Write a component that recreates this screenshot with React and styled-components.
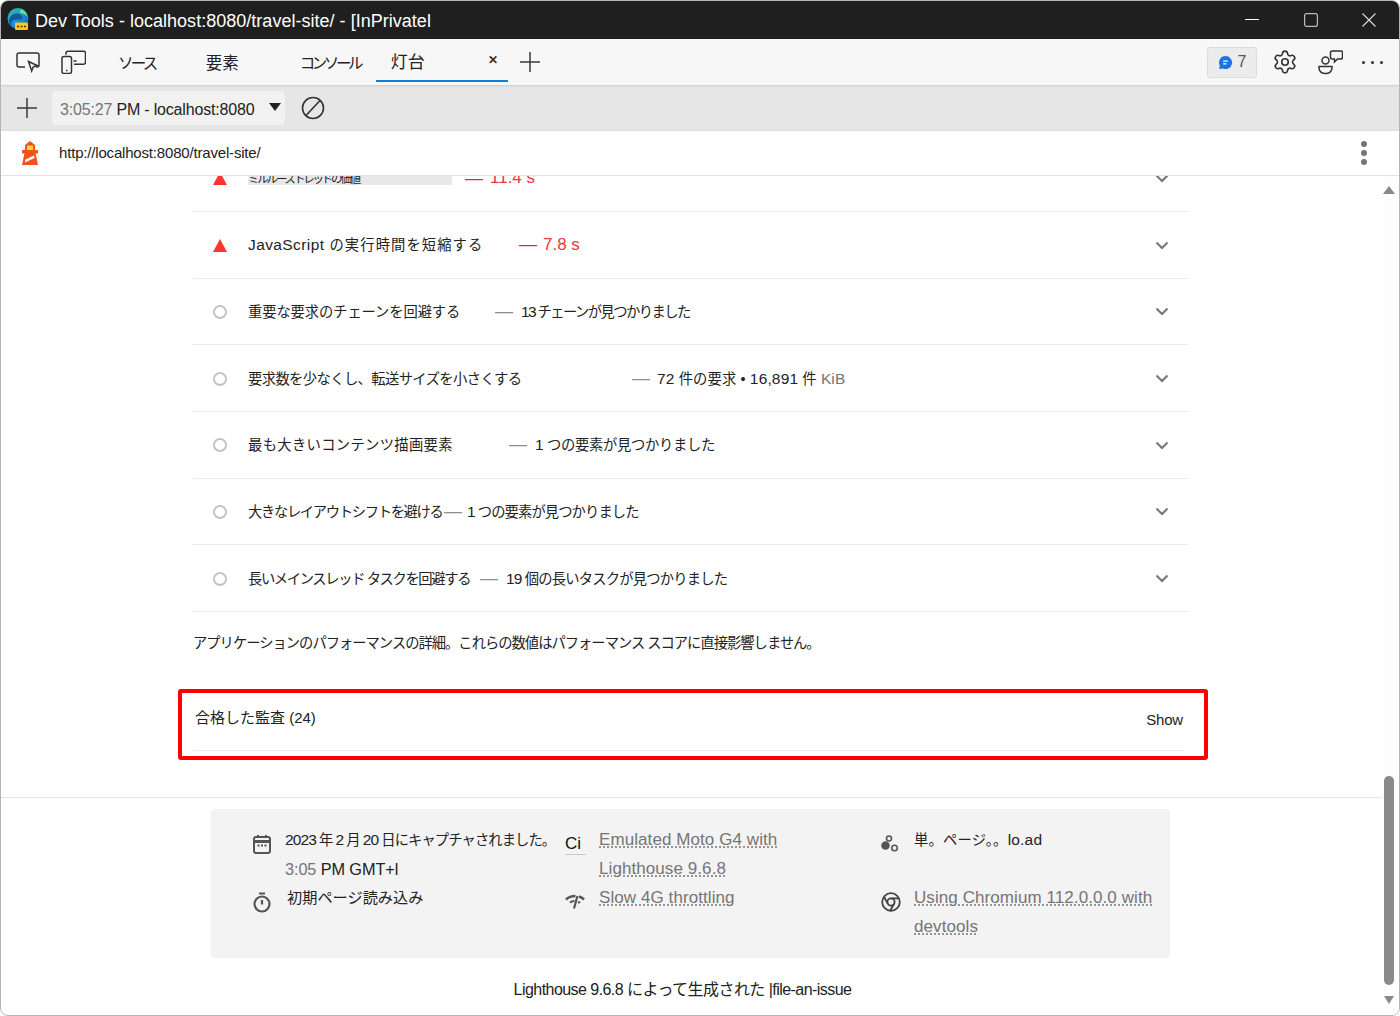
import styled, { createGlobalStyle } from "styled-components";
import { Settings } from "lucide-react";

const Global = createGlobalStyle`
  html, body { margin: 0; padding: 0; background: #fff; }
  body { font-family: "Liberation Sans", "Noto Sans CJK JP", sans-serif; color: #1a1a1a; }
`;

const Muted = styled.span`
  color: #757575;
`;

const Lat = styled.span`
  font-size: 15.5px;
  letter-spacing: ${(p) => (p.$ls === undefined ? "inherit" : `${p.$ls}px`)};
`;

const rows = [
  { id: 1, kind: "fail", hl: true, title: "ミルルーズトレッドの価値", w: 217, dw: 25, value: "11.4 s" },
  { id: 2, kind: "fail", title: <><Lat $ls={0.4}>JavaScript</Lat> の実行時間を短縮する</>, ts: 1.1, w: 271, dw: 24, value: "7.8 s" },
  { id: 3, kind: "info", title: "重要な要求のチェーンを回避する", w: 247, dw: 26, value: <><Lat>13</Lat> チェーンが見つかりました</>, vs: -1.55 },
  { id: 4, kind: "info", title: "要求数を少なくし、転送サイズを小さくする", ts: -0.6, w: 384, dw: 25, value: <><Lat>72</Lat> 件の要求 • <Lat>16,891</Lat> 件 <Muted><Lat>KiB</Lat></Muted></>, vs: 0.15 },
  { id: 5, kind: "info", title: "最も大きいコンテンツ描画要素", ts: 0.33, w: 261, dw: 26, value: <><Lat>1</Lat> つの要素が見つかりました</>, vs: -0.3 },
  { id: 6, kind: "info", title: "大きなレイアウトシフトを避ける", ts: -1.33, w: 196, dw: 23, value: <><Lat>1</Lat> つの要素が見つかりました</>, vs: -0.9 },
  { id: 7, kind: "info", title: "長いメインスレッド タスクを回避する", ts: -1.37, w: 232, dw: 26, value: <><Lat>19</Lat> 個の長いタスクが見つかりました</>, vs: -0.8 },
];

function EdgeLogo() {
  return (
    <svg width="24" height="26" viewBox="0 0 24 26">
      <defs>
        <linearGradient id="edge" x1="0" y1="0" x2="1" y2="1">
          <stop offset="0" stopColor="#35c1a0" />
          <stop offset="0.55" stopColor="#1b8fd8" />
          <stop offset="1" stopColor="#0b5fa8" />
        </linearGradient>
      </defs>
      <circle cx="12" cy="11.5" r="10.5" fill="url(#edge)" />
      <path d="M3 13c1-6 8-8 12-5 2 1.5 2 4 0 4.5-2 .5-5-1-8 1-2 1.5-2 4-1 6-2-1-3-3-3-6.5z" fill="#0d5c9e" />
      <path d="M15 2c3 1 6 4 6.5 8-2-3-5-4-8-4z" fill="#6fe07a" />
      <rect x="9" y="15.5" width="13" height="7.5" rx="1" fill="#f8c81c" />
      <path d="M11 19.5h2M14.5 19.5h2M18 19.5h2" stroke="#4b3b00" strokeWidth="1.5" />
    </svg>
  );
}

function Inspect() {
  return (
    <svg width="24" height="23" viewBox="0 0 24 23" fill="none" stroke="#333" strokeWidth="1.5">
      <path d="M9 16H3a2 2 0 0 1-2-2V4a2 2 0 0 1 2-2h18a2 2 0 0 1 2 2v10a2 2 0 0 1-2 2h-1" />
      <path d="M12.5 10.5l8.5 4-3.8 1.5-1.5 4z" />
    </svg>
  );
}

function DeviceToggle() {
  return (
    <svg width="25" height="24" viewBox="0 0 25 24" fill="none" stroke="#333" strokeWidth="1.5">
      <path d="M5 4.7V3.2a2 2 0 0 1 2-2h15.5a2 2 0 0 1 2 2v9a2 2 0 0 1-2 2H13" />
      <rect x="1" y="6.5" width="9.5" height="17" rx="2" />
      <path d="M5 20.5h1.5" />
      <path d="M12.5 11h3" />
    </svg>
  );
}

function PlusIcon({ size = 22 }) {
  return (
    <svg width={size} height={size} viewBox="0 0 22 22" fill="none" stroke="#3a3a3a" strokeWidth="1.5">
      <path d="M11 1v20M1 11h20" />
    </svg>
  );
}

function BanIcon() {
  return (
    <svg width="24" height="24" viewBox="0 0 24 24" fill="none" stroke="#333" strokeWidth="1.6">
      <circle cx="12" cy="12" r="10.5" />
      <path d="M5 19.5L19 4.5" />
    </svg>
  );
}

function LighthouseLogo() {
  return (
    <svg width="18" height="26" viewBox="0 0 18 26">
      <path d="M9 1l5 4v6H4V5z" fill="#f4511e" />
      <rect x="6" y="5.5" width="6" height="5" fill="#fdd24a" />
      <rect x="1" y="10" width="16" height="3.5" rx="0.5" fill="#f4511e" />
      <path d="M3.5 13h11l2.5 12H1z" fill="#f4511e" />
      <path d="M4.5 19.5l8.5-4 .5 2.5-9.5 4.5z" fill="#fff" />
    </svg>
  );
}

function ChatBubble() {
  return (
    <svg width="15" height="15" viewBox="0 0 16 16">
      <path d="M8 1a7 7 0 1 1-3 13.3L1 15l1-3.6A7 7 0 0 1 8 1z" fill="#1a73e8" />
      <path d="M5.5 6.5h5M5.5 9.5h3.5" stroke="#fff" strokeWidth="1.2" />
    </svg>
  );
}

function PeopleChat() {
  return (
    <svg width="25" height="25" viewBox="0 0 25 25" fill="none" stroke="#333" strokeWidth="1.5">
      <circle cx="7.5" cy="10.5" r="3.5" />
      <path d="M1 16.5h13V18a5.5 5.5 0 0 1-5.5 5.5h-2A5.5 5.5 0 0 1 1 18z" />
      <path d="M14 1h9a1.5 1.5 0 0 1 1.5 1.5v5A1.5 1.5 0 0 1 23 9h-3.5l-3 3V9H14a1.5 1.5 0 0 1-1.5-1.5v-5A1.5 1.5 0 0 1 14 1z" />
    </svg>
  );
}

function Chevron() {
  return (
    <svg width="14" height="9" viewBox="0 0 14 9" fill="none" stroke="#757575" strokeWidth="2">
      <path d="M1.5 1.5L7 7l5.5-5.5" />
    </svg>
  );
}

function CalendarIcon() {
  return (
    <svg width="18" height="20" viewBox="0 0 18 20" fill="none" stroke="#555">
      <rect x="1" y="3" width="16" height="16" rx="2" strokeWidth="2" />
      <path d="M1 7.5h16" strokeWidth="3" />
      <path d="M5 1v3M13 1v3" strokeWidth="2" />
      <path d="M4.5 11.5h2M8 11.5h2M11.5 11.5h2" strokeWidth="1.8" />
    </svg>
  );
}

function TimerIcon() {
  return (
    <svg width="18" height="21" viewBox="0 0 18 21" fill="none" stroke="#555" strokeWidth="2.2">
      <circle cx="9" cy="12" r="7.5" />
      <path d="M6 1.5h6M9 8v4.5" />
    </svg>
  );
}

function WifiIcon() {
  return (
    <svg width="20" height="15" viewBox="0 0 20 15" fill="none" stroke="#555">
      <path d="M1 5.5C3.5 3 7 2 10.5 2" strokeWidth="2.5" />
      <path d="M14 2.5c2 .5 3.5 1.5 5 3" strokeWidth="2.5" />
      <path d="M5 8.5C6.500 7.500 8 7 9.500 7M13 8c.8.2 1.500.5 2 1" strokeWidth="2.2" />
      <path d="M12.5 2L9 14.5" strokeWidth="2.2" />
    </svg>
  );
}

function LoadIcon() {
  return (
    <svg width="20" height="20" viewBox="0 0 20 20" fill="none" stroke="#555" strokeWidth="1.6">
      <circle cx="8" cy="4.5" r="2.5" />
      <circle cx="4.5" cy="11.5" r="3.5" fill="#555" />
      <circle cx="13.5" cy="14" r="2.8" />
    </svg>
  );
}

function ChromeIcon() {
  return (
    <svg width="20" height="20" viewBox="0 0 20 20" fill="none" stroke="#444" strokeWidth="1.8">
      <circle cx="10" cy="10" r="8.8" />
      <circle cx="10" cy="10" r="3.6" />
      <path d="M10 6.4h8M6.9 11.8L2.9 4.8M13.1 11.8L9 19" />
    </svg>
  );
}

export default function App() {
  return (
    <>
      <Global />
      <Win>
        <TitleBar>
          <EdgeLogo />
          <WinTitle>Dev Tools - localhost:8080/travel-site/ - [InPrivatel</WinTitle>
          <WinControls>
            <svg width="14" height="14" viewBox="0 0 14 14" stroke="#fff" fill="none"><path d="M0 6.5h14" /></svg>
            <svg width="14" height="14" viewBox="0 0 14 14" stroke="#bbb" strokeWidth="1.2" fill="none"><rect x=".6" y=".6" width="12.8" height="12.8" rx="2" /></svg>
            <svg width="14" height="14" viewBox="0 0 14 14" stroke="#ddd" strokeWidth="1.1" fill="none"><path d="M.5.5l13 13M13.5.5l-13 13" /></svg>
          </WinControls>
        </TitleBar>

        <Toolbar>
          <ToolIcon $w={24}><Inspect /></ToolIcon>
          <ToolIcon $w={25} $ml={21}><DeviceToggle /></ToolIcon>
          <Tab $ml={32} $ls={-2.7}>ソース</Tab>
          <Tab $ml={50} $size={16.5} $ls={0}>要素</Tab>
          <Tab $ml={61} $ls={-3.4}>コンソール</Tab>
          <ActiveTab>
            灯台
            <TabClose>✕</TabClose>
          </ActiveTab>
          <ToolIcon $w={22} $ml={11}><PlusIcon /></ToolIcon>
          <ToolRight>
            <IssuesBadge><ChatBubble /><span>7</span></IssuesBadge>
            <Settings size={26} strokeWidth={1.5} color="#333" />
            <PeopleChat />
            <MoreDots>
              <i /><i /><i />
            </MoreDots>
          </ToolRight>
        </Toolbar>

        <ReportBar>
          <PlusIcon />
          <ReportSelect>
            <span><Muted>3:05:27</Muted> PM - localhost:8080</span>
            <Caret />
          </ReportSelect>
          <BanIcon />
        </ReportBar>

        <UrlBar>
          <LighthouseLogo />
          <UrlText>http://localhost:8080/travel-site/</UrlText>
          <VDots><i /><i /><i /></VDots>
        </UrlBar>

        <Body>
          <Scroller>
            <Main>
              <AuditList>
                {rows.map((r) => (
                  <AuditRow key={r.id}>
                    <Status>{r.kind === "fail" ? <Triangle /> : <Ring />}</Status>
                    <AuditTitle $w={r.w} $ls={r.ts}>
                      {r.hl ? <Highlight>{r.title}</Highlight> : r.title}
                    </AuditTitle>
                    <Dash $fail={r.kind === "fail"} $w={r.dw}>—</Dash>
                    <AuditValue $fail={r.kind === "fail"} $ls={r.vs}>{r.value}</AuditValue>
                    <ChevronCell><Chevron /></ChevronCell>
                  </AuditRow>
                ))}
              </AuditList>
              <Note>アプリケーションのパフォーマンスの詳細。これらの数値はパフォーマンス スコアに直接影響しません。</Note>
              <Marked>
                <PassedRow>
                  <PassedTitle>合格した監査 (24)</PassedTitle>
                  <ShowLabel>Show</ShowLabel>
                </PassedRow>
              </Marked>
            </Main>
            <FooterRule />
            <EnvBox>
              <EnvItem>
                <EnvIcon><CalendarIcon /></EnvIcon>
                <EnvText $ls={-0.9}>
                  <Lat>2023</Lat> 年 <Lat>2</Lat> 月 <Lat>20</Lat> 日にキャプチャされました。<br />
                  <EnvTime><Muted>3:05</Muted> PM GMT+l</EnvTime>
                </EnvText>
              </EnvItem>
              <EnvItem>
                <CiCell><CiMark>Ci</CiMark></CiCell>
                <EnvLink>Emulated Moto G4 with<br />Lighthouse 9.6.8</EnvLink>
              </EnvItem>
              <EnvItem>
                <EnvIcon $w={33}><LoadIcon /></EnvIcon>
                <EnvText $ls={0.2}>単。ページ。。<Lat>lo.ad</Lat></EnvText>
              </EnvItem>
              <EnvItem>
                <EnvIcon $top={5} $w={34}><TimerIcon /></EnvIcon>
                <EnvText $size={15.2} $ls={0}>初期ページ読み込み</EnvText>
              </EnvItem>
              <EnvItem>
                <EnvIcon $top={7} $w={34}><WifiIcon /></EnvIcon>
                <EnvLink>Slow 4G throttling</EnvLink>
              </EnvItem>
              <EnvItem>
                <EnvIcon $top={5} $w={33}><ChromeIcon /></EnvIcon>
                <EnvLink>Using Chromium 112.0.0.0 with<br />devtools</EnvLink>
              </EnvItem>
            </EnvBox>
            <Generated>Lighthouse 9.6.8 によって生成された |file-an-issue</Generated>
          </Scroller>
          <ScrollTrack>
            <ArrowUp />
            <ThumbSpace />
            <Thumb />
            <ArrowDown />
          </ScrollTrack>
        </Body>
      </Win>
    </>
  );
}

const Win = styled.div`
  box-sizing: border-box;
  width: 1400px;
  height: 1016px;
  display: flex;
  flex-direction: column;
  border: 1px solid #b5b5b5;
  border-radius: 8px;
  overflow: hidden;
  background: #fff;
`;

const TitleBar = styled.div`
  flex: 0 0 38px;
  display: flex;
  align-items: center;
  gap: 5px;
  padding-left: 5px;
  background: #1f1f1f;
  color: #fff;
`;

const WinTitle = styled.div`
  padding-top: 2px;
  font-size: 18px;
  letter-spacing: 0.02px;
`;

const WinControls = styled.div`
  margin-left: auto;
  display: flex;
  align-items: center;
  gap: 44.5px;
  padding-right: 23px;
`;

const Toolbar = styled.div`
  flex: 0 0 46px;
  box-sizing: border-box;
  display: flex;
  align-items: center;
  padding-left: 15px;
  background: #f7f7f7;
  box-shadow: 0 1px 2px rgba(0, 0, 0, 0.12);
  position: relative;
`;

const ToolIcon = styled.div`
  display: flex;
  width: ${(p) => p.$w}px;
  margin-left: ${(p) => p.$ml || 0}px;
`;

const Tab = styled.div`
  margin-left: ${(p) => p.$ml}px;
  font-size: ${(p) => p.$size || 15.5}px;
  letter-spacing: ${(p) => p.$ls}px;
  color: #222;
`;

const ActiveTab = styled.div`
  box-sizing: border-box;
  margin-left: 15.5px;
  align-self: flex-end;
  width: 132px;
  height: 42px;
  display: flex;
  align-items: center;
  justify-content: space-between;
  padding: 0 10px 0 15px;
  border-bottom: 2px solid #0f7fd8;
  margin-bottom: 3px;
  font-size: 17px;
  color: #222;
`;

const TabClose = styled.span`
  font-size: 12px;
  font-weight: bold;
  color: #333;
`;

const ToolRight = styled.div`
  margin-left: auto;
  display: flex;
  align-items: center;
  gap: 20px;
  padding-right: 16px;
`;

const IssuesBadge = styled.div`
  box-sizing: border-box;
  width: 50px;
  height: 31px;
  margin-right: -5px;
  display: flex;
  align-items: center;
  justify-content: center;
  gap: 5px;
  background: #ececec;
  border: 1px solid #dcdcdc;
  border-radius: 3px;
  font-size: 16px;
  color: #555;
`;

const MoreDots = styled.div`
  display: flex;
  gap: 6px;
  margin-left: -1px;
  i {
    width: 3px;
    height: 3px;
    border-radius: 50%;
    background: #333;
  }
`;

const ReportBar = styled.div`
  flex: 0 0 46px;
  display: flex;
  align-items: center;
  padding-left: 15px;
  background: #e6e6e6;
  border-bottom: 1px solid #dcdcdc;
  box-sizing: border-box;
`;

const ReportSelect = styled.div`
  box-sizing: border-box;
  width: 233px;
  height: 34px;
  margin: 0 16px 0 14px;
  padding: 4px 4px 0 8px;
  display: flex;
  align-items: center;
  justify-content: space-between;
  background: #f1f1f1;
  border-radius: 3px;
  font-size: 16px;
  letter-spacing: -0.18px;
  color: #222;
`;

const Caret = styled.span`
  width: 0;
  height: 0;
  border-left: 6px solid transparent;
  border-right: 6px solid transparent;
  border-top: 8px solid #222;
  margin-top: -6px;
`;

const UrlBar = styled.div`
  flex: 0 0 45px;
  box-sizing: border-box;
  display: flex;
  align-items: center;
  padding: 0 32px 0 20px;
  background: #fff;
  border-bottom: 1px solid #e2e2e2;
`;

const UrlText = styled.div`
  margin-left: 20px;
  padding-bottom: 2px;
  font-size: 15px;
  letter-spacing: -0.18px;
  color: #222;
`;

const VDots = styled.div`
  margin-left: auto;
  display: flex;
  flex-direction: column;
  gap: 3px;
  i {
    width: 6px;
    height: 6px;
    border-radius: 50%;
    background: #757575;
  }
`;

const Body = styled.div`
  flex: 1;
  min-height: 0;
  display: flex;
`;

const Scroller = styled.div`
  flex: 1;
  min-width: 0;
  overflow: hidden;
`;

const Main = styled.div`
  padding: 0 194px 0 192px;
`;

const AuditList = styled.div`
  margin-top: -30.7px;
`;

const AuditRow = styled.div`
  box-sizing: border-box;
  height: 66.67px;
  padding-top: 1px;
  display: flex;
  align-items: center;
  border-bottom: 1px solid #ebebeb;
`;

const Status = styled.div`
  flex: 0 0 55px;
  box-sizing: border-box;
  display: flex;
  justify-content: center;
  padding-right: 1px;
`;

const Triangle = styled.span`
  width: 0;
  height: 0;
  border-left: 7px solid transparent;
  border-right: 7px solid transparent;
  border-bottom: 13px solid #ff3333;
`;

const Ring = styled.span`
  box-sizing: border-box;
  width: 14px;
  height: 14px;
  border: 2.5px solid #c4c4c4;
  border-radius: 50%;
`;

const AuditTitle = styled.div`
  width: ${(p) => p.$w}px;
  flex: none;
  margin-top: -3px;
  font-size: 14.3px;
  letter-spacing: ${(p) => p.$ls ?? -0.1}px;
  color: #222;
  white-space: nowrap;
`;

const Highlight = styled.span`
  display: block;
  width: 204px;
  height: 12px;
  margin-top: 3px;
  line-height: 12px;
  font-size: 11.5px;
  letter-spacing: -2.2px;
  background: #e8e8e8;
`;

const Dash = styled.span`
  flex: none;
  width: ${(p) => p.$w}px;
  margin-top: -1px;
  font-size: 18px;
  color: ${(p) => (p.$fail ? "#e8282c" : "#8e8e8e")};
`;

const AuditValue = styled.div`
  margin-top: ${(p) => (p.$fail ? -1 : -3)}px;
  font-size: ${(p) => (p.$fail ? 17 : 14.3)}px;
  letter-spacing: ${(p) => p.$ls ?? 0}px;
  color: ${(p) => (p.$fail ? "#e8383c" : "#222")};
  white-space: nowrap;
`;

const ChevronCell = styled.div`
  margin-left: auto;
  padding-right: 19px;
  display: flex;
`;

const Note = styled.div`
  padding-top: 19px;
  height: 58px;
  font-size: 14.3px;
  letter-spacing: -1px;
  color: #222;
`;

const Marked = styled.div`
  box-sizing: border-box;
  height: 71px;
  margin: 0 -20px 0 -15px;
  padding: 0 20px 0 11px;
  border: 4px solid #ff0000;
  border-radius: 3px;
`;

const PassedRow = styled.div`
  box-sizing: border-box;
  height: 58px;
  display: flex;
  justify-content: space-between;
  border-bottom: 1px solid #ebebeb;
  padding: 13px 1px 0 2px;
  color: #222;
`;

const PassedTitle = styled.div`
  font-size: 15px;
`;

const ShowLabel = styled.div`
  margin-top: 5px;
  font-size: 15px;
  letter-spacing: -0.2px;
`;

const FooterRule = styled.div`
  margin-top: 37px;
  border-top: 1px solid #e4e4e4;
`;

const EnvBox = styled.div`
  box-sizing: border-box;
  width: 959px;
  height: 149px;
  margin: 11px 0 0 210px;
  padding: 16px 0 0 42px;
  display: grid;
  grid-template-columns: 312px 316px 1fr;
  grid-auto-rows: 58px;
  background: #f3f3f3;
  border-radius: 4px;
`;

const EnvItem = styled.div`
  display: flex;
  align-items: flex-start;
`;

const EnvIcon = styled.div`
  flex: 0 0 ${(p) => p.$w || 32}px;
  display: flex;
  padding-top: ${(p) => (p.$top === undefined ? 9 : p.$top + 4)}px;
`;

const CiCell = styled.div`
  flex: 0 0 34px;
  padding-top: 9px;
`;

const CiMark = styled.span`
  padding: 0 5px 1px 0;
  border-bottom: 1px solid #c8c8c8;
  font-size: 17px;
  color: #111;
`;

const EnvText = styled.div`
  font-size: ${(p) => p.$size || 14.3}px;
  line-height: 29px;
  letter-spacing: ${(p) => p.$ls}px;
  color: #222;
  white-space: nowrap;
`;

const EnvTime = styled.span`
  font-size: 16.3px;
  letter-spacing: -0.1px;
`;

const EnvLink = styled.div`
  font-size: 17px;
  line-height: 29px;
  letter-spacing: 0.08px;
  color: #757575;
  white-space: nowrap;
  text-decoration: underline dotted #757575;
  text-underline-offset: 2px;
`;

const Generated = styled.div`
  width: 1363px;
  margin-top: 18px;
  text-align: center;
  font-size: 16px;
  letter-spacing: -0.55px;
  color: #222;
`;

const ScrollTrack = styled.div`
  flex: 0 0 17px;
  box-sizing: border-box;
  display: flex;
  flex-direction: column;
  align-items: center;
  background: #fdfdfd;
  padding: 10px 3px 11px 0;
`;

const ArrowUp = styled.span`
  flex: none;
  width: 0;
  height: 0;
  border-left: 6px solid transparent;
  border-right: 6px solid transparent;
  border-bottom: 8px solid #8a8a8a;
`;

const ArrowDown = styled.span`
  flex: none;
  margin-top: 11px;
  width: 0;
  height: 0;
  border-left: 5px solid transparent;
  border-right: 5px solid transparent;
  border-top: 8px solid #8a8a8a;
`;

const ThumbSpace = styled.div`
  flex: 1;
`;

const Thumb = styled.div`
  flex: 0 0 209px;
  width: 10px;
  background: #8a8a8a;
  border-radius: 5px;
`;
